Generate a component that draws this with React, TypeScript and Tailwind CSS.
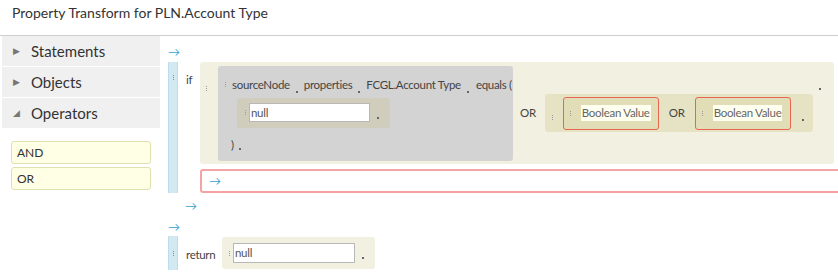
import React from 'react';

const font = { fontFamily: 'Lato, "Open Sans", sans-serif' };

function Grip({ blue }: { blue?: boolean }) {
  const c = blue ? 'bg-[#3f9fc9]' : 'bg-[#9a9a9a]';
  return (
    <span className="inline-flex flex-col gap-[1px] shrink-0">
      <span className={`w-[1px] h-[1px] ${c}`} />
      <span className={`w-[1px] h-[1px] ${c}`} />
      <span className={`w-[1px] h-[1px] ${c}`} />
    </span>
  );
}

function Dot() {
  return <span className="w-[2px] h-[2px] bg-[#666] shrink-0" />;
}

function Arrow() {
  return <span className="text-[#3a9fd0] text-[12px] leading-none">→</span>;
}

function SideItem({ label, open }: { label: string; open?: boolean }) {
  return (
    <div className="h-[31px] bg-[#f0f0f0] border-b border-white flex items-center pl-[11px] gap-[9px] text-[15px] text-[#333]">
      <span className="text-[9px] text-[#777] w-[9px]">{open ? '◢' : '▶'}</span>
      {label}
    </div>
  );
}

function OpBox({ label }: { label: string }) {
  return (
    <div className="h-[23px] mx-[11px] w-[140px] bg-[#ffffe6] border border-[#e0dfb0] rounded-[3px] flex items-center px-[5px] text-[12px] text-[#333]">
      {label}
    </div>
  );
}

function BoolBox() {
  return (
    <div className="h-[33px] w-[96px] shrink-0 bg-[#e1ddb6] border border-[#e8654f] rounded-[3px] flex items-center gap-[10px] pl-[6px] whitespace-nowrap">
      <Grip />
      <span className="bg-[#fffff0] text-[#666] px-[1px] leading-[16px]">Boolean Value</span>
    </div>
  );
}

function Sep({ w }: { w: string }) {
  return (
    <span className={`${w} shrink-0 flex justify-center self-end`}>
      <Dot />
    </span>
  );
}

export default function App() {
  return (
    <div className="w-[838px] h-[274px] bg-white overflow-hidden text-[#444] whitespace-nowrap" style={font}>
      <div className="h-[36px] border-b border-[#cfcfcf] pl-[12px] pt-[2px] text-[14px] text-[#333]">
        Property Transform for PLN.Account Type
      </div>
      <div className="flex">
        <div className="w-[160px] pl-[2px] shrink-0">
          <SideItem label="Statements" />
          <SideItem label="Objects" />
          <SideItem label="Operators" open />
          <div className="flex flex-col gap-[3px] mt-[12px] -ml-[2px]">
            <OpBox label="AND" />
            <OpBox label="OR" />
          </div>
        </div>

        <div className="flex-1 pl-[8px] text-[11.5px] tracking-[-0.3px]">
          <div className="h-[26px] flex items-center pt-[6px]">
            <Arrow />
          </div>

          <div className="flex h-[131px]">
            <div className="w-[10px] bg-[#d3e9f1] border-x border-[#bcdde9] flex justify-center pt-[13px] shrink-0">
              <Grip blue />
            </div>
            <div className="pl-[8px] pt-[9px] w-[22px] shrink-0">if</div>
            <div className="flex flex-col gap-[5px] flex-1">
              <div className="h-[102px] bg-[#f2f0e0] rounded-[3px] flex items-center pl-[6px] mr-[4px]">
                <div className="self-start pt-[12px]"><Grip /></div>
                <div className="ml-[11px] w-[295px] h-[95px] shrink-0 bg-[#d3d3d3] rounded-[3px] flex flex-col pl-[7px] pt-[11px]">
                  <div className="flex items-center h-[16px]">
                    <Grip />
                    <span className="ml-[6px]">sourceNode</span>
                    <Sep w="w-[14px]" />
                    <span>properties</span>
                    <Sep w="w-[14px]" />
                    <span>FCGL.Account Type</span>
                    <Sep w="w-[15px]" />
                    <span>equals (</span>
                  </div>
                  <div className="flex mt-[5px] ml-[12px]">
                    <div className="w-[153px] h-[30px] bg-[#d0cdbc] rounded-[3px] flex items-center pl-[8px] gap-[3px]">
                      <Grip />
                      <div className="w-[121px] h-[19px] bg-white border border-[#b8b8b8] flex items-center pl-[1px] text-[#555]">null</div>
                      <span className="ml-[4px] flex mt-[10px]"><Dot /></span>
                    </div>
                  </div>
                  <div className="flex items-center gap-[5px] mt-[9px] ml-[6px] h-[16px]">
                    <span>)</span>
                    <span className="flex mt-[8px]"><Dot /></span>
                  </div>
                </div>
                <span className="ml-[7px] mr-[9px]">OR</span>
                <div className="h-[38px] w-[268px] shrink-0 bg-[#e6e3c5] rounded-[3px] flex items-center pl-[7px]">
                  <div className="self-start pt-[9px] mr-[10px]"><Grip /></div>
                  <BoolBox />
                  <span className="mx-[10px]">OR</span>
                  <BoolBox />
                  <span className="ml-[11px] mt-[14px] flex"><Dot /></span>
                </div>
                <span className="ml-[6px] -mt-[48px] flex"><Dot /></span>
              </div>
              <div className="h-[24px] border-2 border-[#f3a5a5] rounded-l-[3px] border-r-0 flex items-center pl-[7px]">
                <Arrow />
              </div>
            </div>
          </div>

          <div className="h-[22px] flex items-center pl-[17px] pt-[4px]">
            <Arrow />
          </div>
          <div className="h-[20px] flex items-center pt-[4px]">
            <Arrow />
          </div>

          <div className="flex mt-[1px]">
            <div className="w-[10px] h-[34px] bg-[#d3e9f1] border-x border-[#bcdde9] flex justify-center pt-[15px] shrink-0">
              <Grip blue />
            </div>
            <div className="pl-[8px] pt-[10px] w-[44px] shrink-0">return</div>
            <div className="w-[153px] h-[32px] mt-[1px] bg-[#f2f0e0] rounded-[3px] flex items-center pl-[7px] gap-[3px]">
              <Grip />
              <div className="w-[122px] h-[20px] bg-white border border-[#b8b8b8] flex items-center pl-[1px] text-[#555]">null</div>
              <span className="ml-[4px] flex mt-[10px]"><Dot /></span>
            </div>
          </div>
        </div>
      </div>
    </div>
  );
}
